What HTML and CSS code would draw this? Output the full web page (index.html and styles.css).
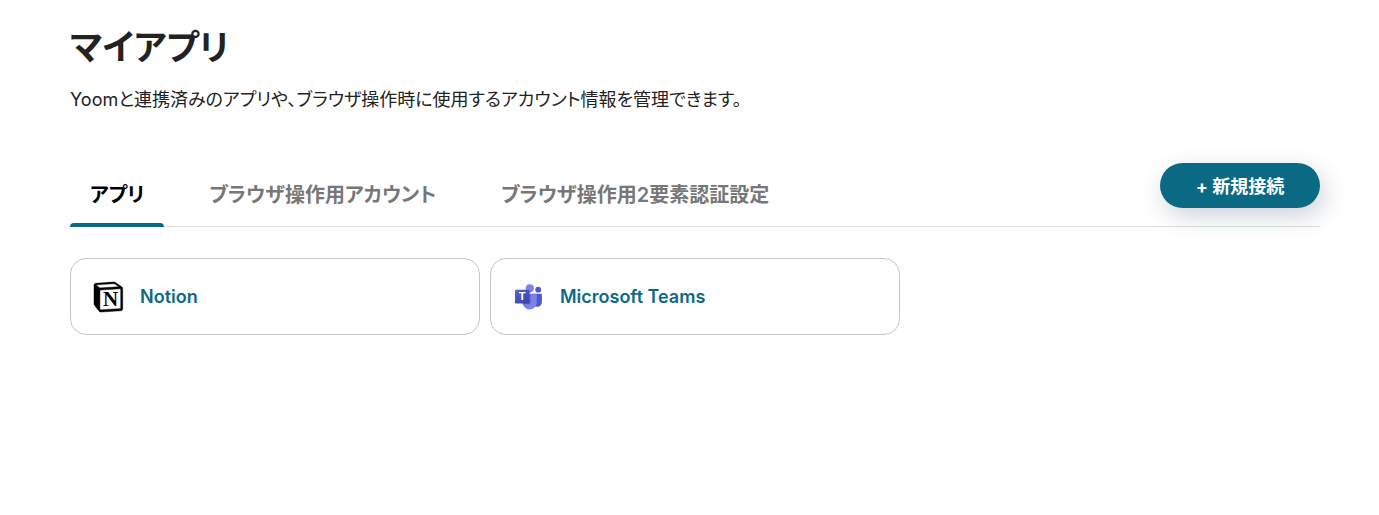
FILE: index.html
```html
<!doctype html>
<html lang="ja">
<head>
	<meta charset="utf-8">
	<meta name="viewport" content="width=device-width, initial-scale=1">
	<title>マイアプリ</title>
	<link rel="stylesheet" href="styles.css">
</head>
<body>

	<main class="page">
		<h1 class="page_title">マイアプリ</h1>
		<p class="page_desc">Yoomと連携済みのアプリや、ブラウザ操作時に使用するアカウント情報を管理できます。</p>

		<!--tabs start-->
		<div class="toolbar">
			<nav class="tabs">
				<a class="tab active" href="#apps">アプリ</a>
				<a class="tab" href="#accounts">ブラウザ操作用アカウント</a>
				<a class="tab" href="#two-factor">ブラウザ操作用2要素認証設定</a>
			</nav>
			<button type="button" class="btn_add">+ 新規接続</button>
		</div>
		<!--end tabs-->

		<!--apps start-->
		<ul class="apps" id="apps">
			<li>
				<a class="app" href="#notion">
					<svg class="app_icon" viewBox="0 0 100 100" aria-hidden="true">
						<path fill="#fff" d="M6 4.300l55.300-4.100c6.800-.600 8.500-.200 12.800 2.900l17.700 12.500c2.900 2.100 3.900 2.700 3.900 5v68.300c0 4.300-1.600 6.800-7 7.200L24.500 100c-4.100.200-6-.400-8.200-3.100L3.300 80C1 76.800 0 74.500 0 71.800V11.100C0 7.600 1.600 4.700 6 4.300z"/>
						<path fill="#000" stroke="#000" stroke-width="1.500" fill-rule="evenodd" d="M61.350.227L6.017 4.314C1.553 4.700 0 7.617 0 11.113v60.660c0 2.723.967 5.053 3.300 8.167l13.007 16.913c2.137 2.723 4.080 3.307 8.160 3.113l64.257-3.890c5.433-.387 6.990-2.917 6.990-7.193V20.640c0-2.210-.873-2.847-3.443-4.733L74.167 3.143C69.894.036 68.147-.357 61.350.227zM25.920 19.523c-5.247.353-6.437.433-9.417-1.990l-7.576-6.026c-.770-.780-.383-1.753 1.557-1.947l53.193-3.887c4.467-.390 6.793 1.167 8.540 2.527l9.123 6.610c.390.197 1.360 1.360.193 1.360L26.600 19.477zM19.803 88.300V30.367c0-2.530.777-3.697 3.103-3.893L86 22.780c2.140-.193 3.107 1.167 3.107 3.693v57.547c0 2.530-.390 4.670-3.883 4.863l-60.377 3.500c-3.493.193-5.044-.970-5.044-4.083z"/>
						<text class="notion_mark" x="55" y="81" text-anchor="middle">N</text>
					</svg>
					<span class="app_name">Notion</span>
				</a>
			</li>
			<li>
				<a class="app" href="#teams">
					<svg class="app_icon" viewBox="0 0 30 30" aria-hidden="true">
						<defs>
							<linearGradient id="tile" x1="0" y1="0" x2="1" y2="1">
								<stop offset="0" stop-color="#5a62c3"/>
								<stop offset="1" stop-color="#3940ab"/>
							</linearGradient>
						</defs>
						<circle cx="24.200" cy="7.700" r="2.900" fill="#5059c9"/>
						<path fill="#5059c9" d="M19 11.700h7.700c.700 0 1.200.500 1.200 1.200V20c0 2.700-2.100 4.800-4.700 4.800S19 22.700 19 20z"/>
						<circle cx="15.800" cy="6.300" r="4.100" fill="#7b83eb"/>
						<path fill="#7b83eb" d="M9.500 11.700h12c.700 0 1.200.500 1.200 1.200v7.300c0 4-3.100 7.200-7 7.200s-7.200-3.200-7.200-7.200v-7.500c0-.600.400-1 1-1z"/>
						<path fill="#000" opacity=".22" d="M8.500 8.500h6.900c.700 0 1.200.500 1.200 1.200v11.200c0 .800-.500 1.300-1.200 1.300H8.700z"/>
						<rect x="1" y="7.700" width="14.300" height="13.800" rx="1.200" fill="url(#tile)"/>
						<text class="teams_mark" x="8.150" y="18.400" text-anchor="middle">T</text>
					</svg>
					<span class="app_name">Microsoft Teams</span>
				</a>
			</li>
		</ul>
		<!--end apps-->
	</main>

</body>
</html>
```

FILE: styles.css
```css
*{margin:0;padding:0;box-sizing:border-box;}
body{background:#fff;color:#222;font-size:18px;font-family:Inter,"Noto Sans CJK JP",sans-serif;font-feature-settings:"palt";}
a{color:inherit;text-decoration:none;}
ul{list-style:none;}

.page{padding:21px 59px 40px 70px;}
.page_title{font-size:35px;line-height:52px;font-weight:700;}
.page_desc{margin-top:13px;font-size:18px;line-height:28px;font-weight:400;}

/*tabs start*/
.toolbar{display:flex;justify-content:space-between;align-items:flex-start;margin-top:49px;border-bottom:1px solid #dcdfe0;}
.tabs{display:flex;gap:25px;margin-bottom:-1px;}
.tab{padding:18px 20px 13px;border-bottom:4px solid transparent;font-size:20px;line-height:29px;font-weight:600;color:#777;}
.tab.active{position:relative;color:#000;}
.tab.active::after{content:"";position:absolute;left:0;right:0;bottom:-4px;height:4px;border-radius:4px 4px 0 0;background:#0b6a83;}
.btn_add{width:160px;height:45px;padding-bottom:2px;border:none;border-radius:24px;background:#0b6a83;color:#fff;font-family:inherit;font-size:18px;font-weight:700;font-feature-settings:inherit;box-shadow:4px 8px 24px rgba(20,50,80,.22);cursor:pointer;}
/*end tabs*/

/*apps start*/
.apps{display:grid;grid-template-columns:repeat(3,1fr);gap:10px;margin-top:31px;}
.app{display:flex;align-items:center;gap:16px;height:77px;padding:0 23px;border:1px solid #c4c6c7;border-radius:16px;}
.app_icon{width:30px;height:30px;flex:none;overflow:visible;}
.app_name{font-size:18px;line-height:28px;font-weight:600;color:#0b6a83;}
.notion_mark{font-family:"Liberation Serif",serif;font-size:70px;font-weight:700;fill:#000;}
.teams_mark{font-family:"Liberation Sans",sans-serif;font-size:11px;font-weight:700;fill:#fff;}
/*end apps*/
```
